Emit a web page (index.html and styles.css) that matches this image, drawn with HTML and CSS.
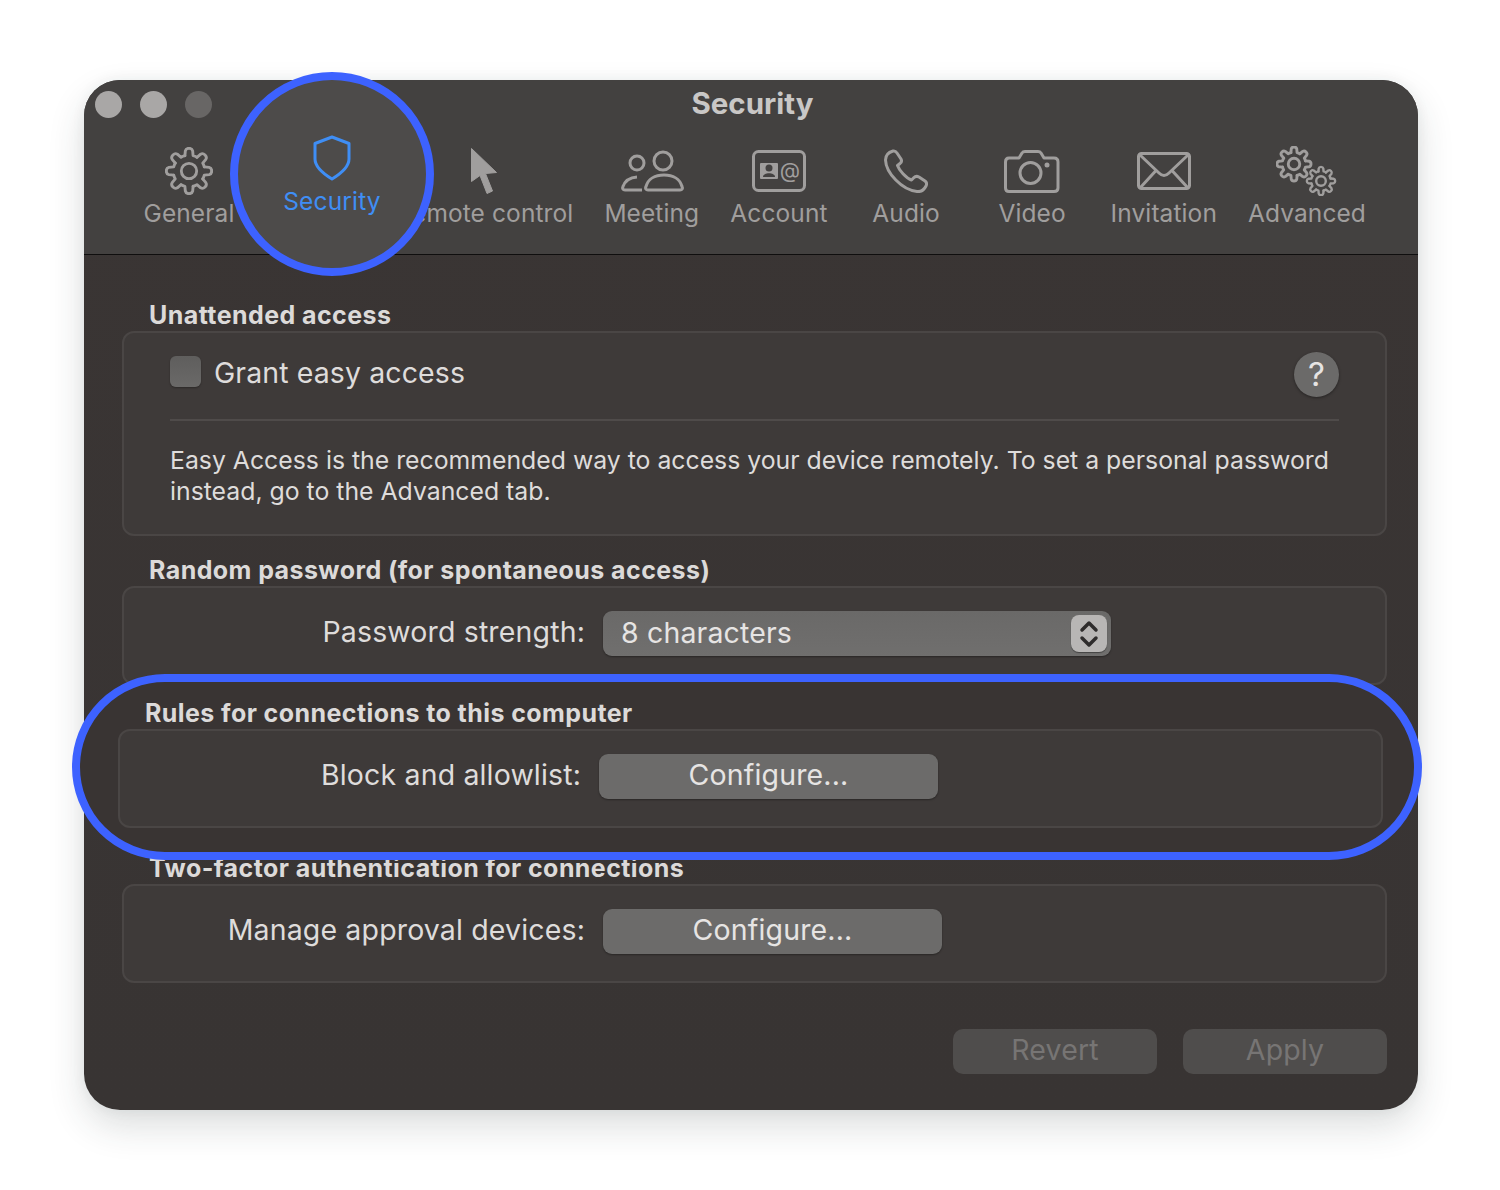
FILE: index.html
```html
<!DOCTYPE html>
<html lang="en">
<head>
<meta charset="utf-8">
<title>Security</title>
<link rel="stylesheet" href="styles.css">
</head>
<body>
<svg class="defs" width="0" height="0" aria-hidden="true">
  <defs>
    <symbol id="gear" viewBox="-25 -25 50 50" overflow="visible">
      <g fill="none" stroke="currentColor" stroke-linecap="round" stroke-linejoin="round">
        <path id="tooth" d="M-4.27-15.94L-3.82-21C-3-24.5 3-24.5 3.82-21L4.27-15.94A16.5 16.5 0 0 1 8.25-14.29"/>
        <use href="#tooth" transform="rotate(45)"/>
        <use href="#tooth" transform="rotate(90)"/>
        <use href="#tooth" transform="rotate(135)"/>
        <use href="#tooth" transform="rotate(180)"/>
        <use href="#tooth" transform="rotate(225)"/>
        <use href="#tooth" transform="rotate(270)"/>
        <use href="#tooth" transform="rotate(315)"/>
        <circle r="8"/>
      </g>
    </symbol>
  </defs>
</svg>
<main class="window">
  <header class="toolbar">
    <div class="titlebar">
      <div class="lights">
        <span class="light"></span>
        <span class="light"></span>
        <span class="light light-off"></span>
      </div>
      <h1 class="title">Security</h1>
    </div>
    <nav class="tabs">
      <div class="tab">
        <span class="tab-icon"><svg class="icon-gear" width="48" height="48"><use href="#gear"/></svg></span>
        <span class="tab-label">General</span>
      </div>
      <div class="tab tab-security">
        <div class="spot">
          <svg width="38" height="46" viewBox="0 0 38 46" fill="none" stroke="currentColor" stroke-width="3" stroke-linejoin="round"><path d="M19 2L36 8.500V24C36 31 30.500 37 19 44C7.500 37 2 31 2 24V8.500Z"/></svg>
          <span class="spot-label">Security</span>
        </div>
      </div>
      <div class="tab">
        <span class="tab-icon"><svg width="27" height="46" viewBox="0 0 27 46" fill="currentColor" stroke="currentColor" stroke-linejoin="round"><path d="M.5 .5L25.500 24.500L14.500 25.500L21.500 43L16 45.500L9 27.500L.5 33.500Z"/></svg></span>
        <span class="tab-label">Remote control</span>
      </div>
      <div class="tab">
        <span class="tab-icon"><svg width="64" height="42" viewBox="0 0 64 42" fill="none" stroke="currentColor" stroke-width="3"><circle cx="43" cy="11" r="9"/><circle cx="17" cy="13" r="7"/><path d="M28 40H60C62 40 63 38.500 62 36.500C60 29 53 25 44 25C35 25 28 29 26 36.500C25 38.500 26 40 28 40Z"/><path d="M22 40H5C3 40 2 38.500 3 36.500C5 31 10 27.500 17 27"/></svg></span>
        <span class="tab-label">Meeting</span>
      </div>
      <div class="tab">
        <span class="tab-icon"><svg width="54" height="42" viewBox="0 0 54 42"><rect x="1.500" y="1.500" width="51" height="39" rx="5" fill="none" stroke="currentColor" stroke-width="3"/><rect x="8" y="13" width="18" height="16" rx="1" fill="currentColor"/><circle cx="17" cy="18" r="3.500" fill="#444241"/><path d="M11 27C11 22 23 22 23 27Z" fill="#444241"/><text class="at" x="38" y="27.500" text-anchor="middle">@</text></svg></span>
        <span class="tab-label">Account</span>
      </div>
      <div class="tab">
        <span class="tab-icon"><svg width="44" height="44" viewBox="0 0 44 44" fill="none" stroke="currentColor" stroke-width="3" stroke-linejoin="round"><path d="M9 2C11 1.500 12 2.500 13 4L17 10C18 12 17.500 13.500 16 14.500L13.500 16.500C15 21 22 29 27.500 31L30 28.500C31.500 27 33 27 35 28L41 32C43 33.500 43 35 42 37C40 41 37 43 33 42.500C18 41 2 24 1.500 11C1.500 7 4 3.500 9 2Z"/></svg></span>
        <span class="tab-label">Audio</span>
      </div>
      <div class="tab">
        <span class="tab-icon"><svg width="56" height="43" viewBox="0 0 56 43" fill="none" stroke="currentColor" stroke-width="3" stroke-linejoin="round"><path d="M5 8H15L18 3Q19 1.500 21 1.500H34Q36 1.500 37 3L40 8H50Q54 8 54 12V38Q54 41.500 50 41.500H5Q1.500 41.500 1.500 38V12Q1.500 8 5 8Z"/><circle cx="26.500" cy="23" r="10.500"/><circle cx="43" cy="15" r="2.500" fill="currentColor" stroke="none"/></svg></span>
        <span class="tab-label">Video</span>
      </div>
      <div class="tab">
        <span class="tab-icon"><svg width="54" height="38" viewBox="0 0 54 38" fill="none" stroke="currentColor" stroke-width="3" stroke-linejoin="round"><rect x="1.500" y="1.500" width="51" height="35" rx="3"/><path d="M3 3L22 21Q27 26 32 21L51 3M3 36L19 18.500M51 36L35 18.500"/></svg></span>
        <span class="tab-label">Invitation</span>
      </div>
      <div class="tab">
        <span class="tab-icon"><svg width="62" height="50" viewBox="0 0 62 50" class="icon-gears"><use href="#gear" x="0" y="0" width="36" height="36"/><use href="#gear" x="30" y="20" width="30" height="30"/></svg></span>
        <span class="tab-label">Advanced</span>
      </div>
    </nav>
  </header>

  <div class="content">
    <h2 class="group-title">Unattended access</h2>
    <section class="box box-access">
      <div class="access-row">
        <span class="checkbox"></span>
        <span class="check-label">Grant easy access</span>
        <span class="help">?</span>
      </div>
      <hr class="sep">
      <p class="note">Easy Access is the recommended way to access your device remotely. To set a personal password instead, go to the Advanced tab.</p>
    </section>

    <h2 class="group-title group-gap">Random password (for spontaneous access)</h2>
    <section class="box form-row">
      <span class="form-label">Password strength:</span>
      <div class="select">
        <span class="select-value">8 characters</span>
        <span class="stepper"><svg width="20" height="28" viewBox="0 0 20 28" fill="none" stroke="currentColor" stroke-width="3.500" stroke-linecap="round" stroke-linejoin="round"><path d="M3 10L10 3L17 10M3 18L10 25L17 18"/></svg></span>
      </div>
    </section>

    <div class="pill">
      <h2 class="group-title">Rules for connections to this computer</h2>
      <section class="box form-row">
        <span class="form-label">Block and allowlist:</span>
        <span class="button">Configure...</span>
      </section>
    </div>

    <h2 class="group-title group-after-pill">Two-factor authentication for connections</h2>
    <section class="box form-row">
      <span class="form-label">Manage approval devices:</span>
      <span class="button">Configure...</span>
    </section>

    <div class="actions">
      <span class="button-off">Revert</span>
      <span class="button-off">Apply</span>
    </div>
  </div>
</main>
</body>
</html>
```

FILE: styles.css
```css
* { box-sizing: border-box; }

html, body { margin: 0; padding: 0; background: #fff; }

body {
  width: 1500px;
  height: 1190px;
  overflow: hidden;
  padding: 80px 82px 0 84px;
  font-family: "Inter", "Liberation Sans", sans-serif;
  -webkit-font-smoothing: antialiased;
}

.defs { position: absolute; }

.window {
  width: 1334px;
  height: 1030px;
  border-radius: 36px;
  background: linear-gradient(#3a3534, #383433);
  box-shadow: 0 16px 36px rgba(40, 50, 50, 0.16), 0 0 14px rgba(40, 50, 50, 0.06);
}

.toolbar {
  height: 175px;
  border-radius: 36px 36px 0 0;
  background: #434140;
  border-bottom: 1px solid #0f0e0e;
}

.titlebar {
  position: relative;
  height: 45px;
  padding-left: 3px;
  display: flex;
  align-items: center;
  justify-content: center;
}

.lights {
  position: absolute;
  left: 11px;
  top: 11px;
  display: flex;
  gap: 18px;
}

.light {
  width: 27px;
  height: 27px;
  border-radius: 50%;
  background: #a9a7a6;
}

.light-off { background: #686665; }

.title {
  margin: 0;
  font-size: 29.500px;
  font-weight: 700;
  color: #c9c7c6;
}

.tabs {
  display: flex;
  padding: 22px 0 0 42px;
}

.tab {
  min-width: 126px;
  padding: 0 15.500px;
  display: flex;
  flex-direction: column;
  align-items: center;
  color: #a09e9d;
}

.tab-security {
  width: 129px;
  position: relative;
}

.tab-icon {
  height: 48px;
  display: flex;
  align-items: center;
  justify-content: center;
}

.tab-label {
  height: 36px;
  line-height: 36px;
  font-size: 24.500px;
  letter-spacing: 0.1px;
  white-space: nowrap;
}

.icon-gear { stroke-width: 3; }
.icon-gear use { stroke-width: 3; }
.icon-gears use { stroke-width: 4; }

.at {
  font-family: "Inter", "Liberation Sans", sans-serif;
  font-size: 21px;
  fill: currentColor;
}

.spot {
  position: absolute;
  z-index: 3;
  left: -22px;
  top: -75px;
  width: 204px;
  height: 204px;
  border-radius: 50%;
  border: 8px solid #3d62ff;
  background: #4d4b4a;
  color: #3f8ef5;
  display: flex;
  flex-direction: column;
  align-items: center;
  padding-top: 55px;
}

.spot-label {
  margin-top: 2px;
  font-size: 24.500px;
  letter-spacing: 0.15px;
  line-height: 36px;
}

.content { padding: 44px 31px 0 38px; }

.group-title {
  margin: 0 0 0 27px;
  height: 32px;
  line-height: 32px;
  font-size: 25px;
  font-weight: 700;
  letter-spacing: 0.42px;
  color: #dcdad9;
  white-space: nowrap;
}

.group-gap { margin-top: 18px; }

.group-after-pill { margin-top: -8px; }

.box {
  width: 1265px;
  border: 2px solid #4a4645;
  border-radius: 12px;
  background: #3e3a39;
}

.box-access {
  height: 205px;
  padding: 17px 46px 0 46px;
}

.access-row {
  display: flex;
  align-items: center;
  height: 45px;
}

.checkbox {
  width: 31px;
  height: 31px;
  margin-top: -2px;
  border-radius: 6px;
  background: linear-gradient(#5f5e5d, #6a6968);
  box-shadow: 0 1px 2px rgba(0, 0, 0, 0.3);
}

.check-label {
  margin-left: 13px;
  font-size: 28.500px;
  letter-spacing: 0.1px;
  line-height: 42px;
  color: #dedcdb;
}

.help {
  margin: 4px 0 0 auto;
  width: 45px;
  height: 45px;
  border-radius: 50%;
  background: #6b6a69;
  box-shadow: 0 1px 3px rgba(0, 0, 0, 0.4);
  color: #e6e4e3;
  font-size: 33px;
  line-height: 45px;
  text-align: center;
}

.sep {
  margin: 24px 0 0;
  border: 0;
  height: 2px;
  background: #4f4b4a;
}

.note {
  margin: 24px 0 0;
  font-size: 24.800px;
  line-height: 31px;
  color: #dedcdb;
}

.form-row {
  height: 99px;
  padding-top: 23px;
  display: flex;
  align-items: flex-start;
}

.form-label {
  width: 461px;
  height: 45px;
  line-height: 41px;
  text-align: right;
  font-size: 28.500px;
  letter-spacing: 0.15px;
  color: #dedcdb;
  white-space: nowrap;
}

.select {
  margin-left: 18px;
  width: 508px;
  height: 45px;
  padding: 0 4px 0 18px;
  display: flex;
  align-items: center;
  justify-content: space-between;
  border-radius: 9px;
  background: linear-gradient(#6a6968, #706f6e);
  box-shadow: 0 1px 2px rgba(0, 0, 0, 0.35);
  font-size: 28.500px;
  letter-spacing: 0.15px;
  line-height: 41px;
  color: #e6e4e3;
}

.select-value { margin-bottom: 3px; }

.stepper {
  width: 36px;
  height: 37px;
  border-radius: 8px;
  background: #b8b6b5;
  box-shadow: 0 1px 1px rgba(0, 0, 0, 0.4);
  color: #2e2c2c;
  display: flex;
  align-items: center;
  justify-content: center;
}

.button {
  margin-left: 18px;
  width: 339px;
  height: 45px;
  border-radius: 9px;
  background: #6c6b6a;
  box-shadow: 0 1px 2px rgba(0, 0, 0, 0.35);
  text-align: center;
  line-height: 41px;
  font-size: 28.500px;
  letter-spacing: 0.15px;
  color: #e6e4e3;
}

.pill {
  position: relative;
  z-index: 2;
  width: 1350px;
  height: 186px;
  margin: -11px 0 0 -50px;
  padding: 15px 0 0 38px;
  border: 8px solid #3d62ff;
  border-radius: 93px;
  background: #393433;
}

.actions {
  margin-top: 46px;
  display: flex;
  justify-content: flex-end;
  gap: 26px;
}

.button-off {
  width: 204px;
  height: 45px;
  border-radius: 10px;
  background: #4f4d4c;
  text-align: center;
  line-height: 41px;
  font-size: 28.500px;
  letter-spacing: 0.15px;
  color: #777574;
}
```
